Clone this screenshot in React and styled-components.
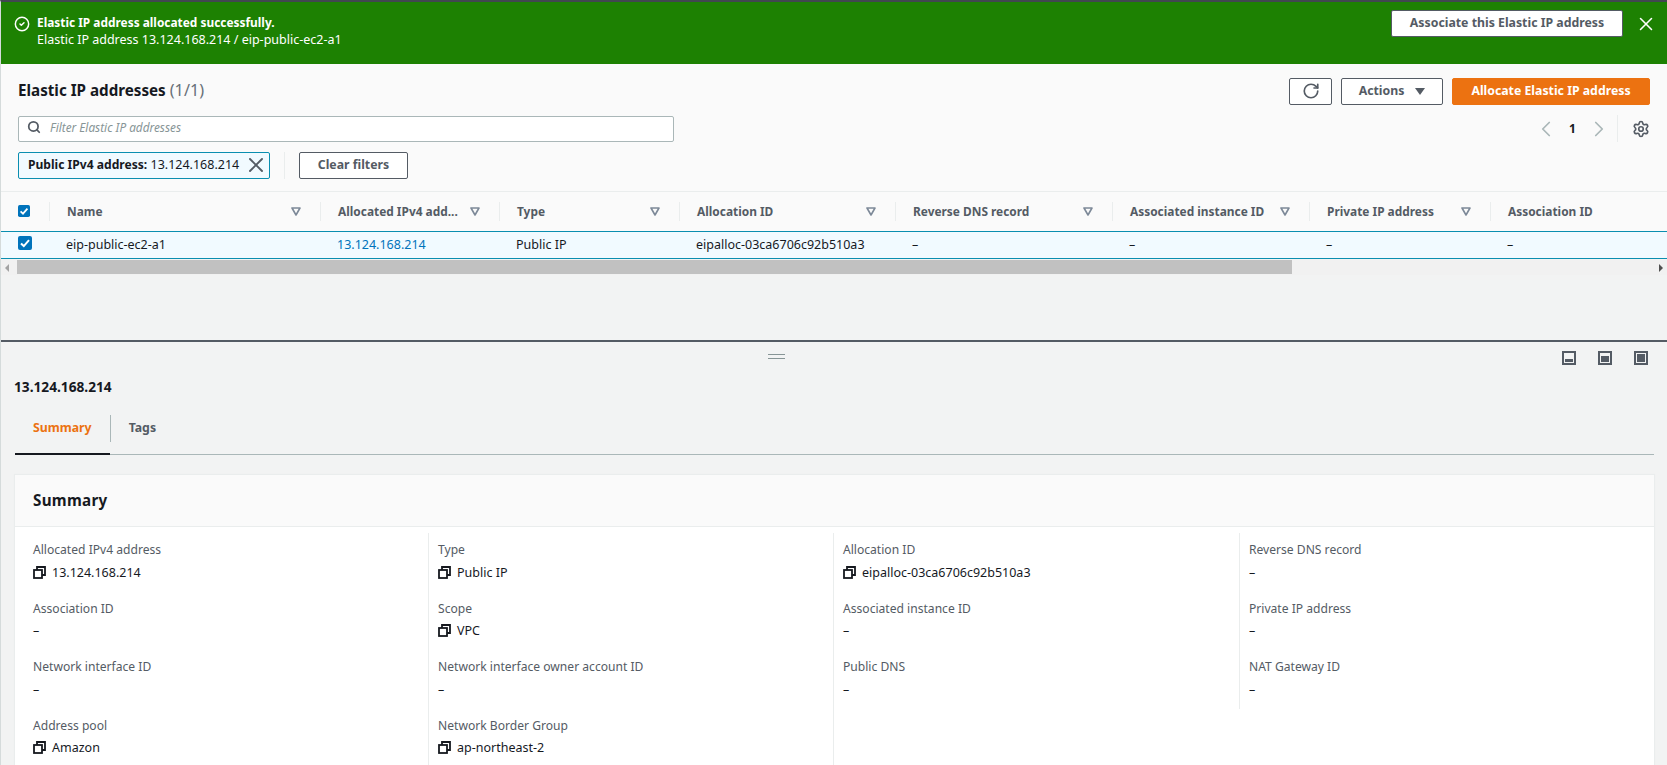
import React from 'react';
import styled, { createGlobalStyle } from 'styled-components';
import { ChevronLeft, ChevronRight, CircleCheck, RotateCw, Search, Settings, X } from 'lucide-react';

const GlobalStyle = createGlobalStyle`
  html, body { margin: 0; padding: 0; height: 100%; overflow: hidden; }
  body { font-family: "Noto Sans", "Liberation Sans", sans-serif; font-size: 13px; color: #16191f; }
  * { box-sizing: border-box; }
`;

const Page = styled.div`
  width: 1667px;
  height: 765px;
  overflow: hidden;
  border-top: 2px solid #414750;
  border-left: 1px solid #d5dbdb;
  background: #f2f3f3;
`;

const Banner = styled.div`
  height: 62px;
  background: #1d8102;
  color: #fff;
  display: flex;
  align-items: flex-start;
  padding: 8px 10px 0 13px;
`;

const BannerText = styled.div`
  flex: 1;
  margin-left: 7px;
  padding-top: 4px;
  line-height: 17px;
  font-size: 12.5px;
  strong { display: block; font-weight: 700; font-size: 11.9px; }
`;

const BaseButton = styled.button`
  font-family: inherit;
  font-weight: 700;
  font-size: 12.3px;
  height: 27px;
  border-radius: 2px;
  border: 1px solid #545b64;
  background: #fff;
  color: #545b64;
  display: inline-flex;
  align-items: center;
  justify-content: center;
  padding: 0 0 2px;
  width: ${(p) => p.$w}px;
`;

const OrangeButton = styled(BaseButton)`
  background: #ec7211;
  border-color: #ec7211;
  color: #fff;
`;

const CloseBtn = styled.span`
  display: inline-flex;
  margin: 1px 0 0 12px;
  width: 22px;
  justify-content: center;
`;

const Panel = styled.section`
  background: #fafafa;
  height: 127px;
  padding: 14px 17px 0 17px;
`;

const TitleRow = styled.div`
  display: flex;
  align-items: center;
  justify-content: space-between;
  height: 27px;
`;

const Title = styled.h1`
  margin: 0;
  padding-bottom: 3px;
  font-size: 15.2px;
  font-weight: 700;
  span { font-weight: 400; color: #687078; font-size: 16.3px; }
`;

const Actions = styled.div`
  display: flex;
  gap: 9px;
`;

const CaretDown = styled.span`
  width: 0;
  height: 0;
  margin: 2px 0 0 11px;
  border-left: 5px solid transparent;
  border-right: 5px solid transparent;
  border-top: 7px solid #545b64;
`;

const SearchRow = styled.div`
  display: flex;
  align-items: center;
  justify-content: space-between;
  margin-top: 10px;
`;

const SearchBox = styled.div`
  width: 656px;
  height: 26px;
  background: #fff;
  border: 1px solid #aab7b8;
  border-radius: 2px;
  display: flex;
  align-items: center;
  padding: 0 0 3px 8px;
  gap: 9px;
  font-style: italic;
  font-size: 11.8px;
  color: #879596;
`;

const Pager = styled.div`
  display: flex;
  align-items: center;
  color: #16191f;
  font-weight: 700;
  font-size: 12px;
  height: 27px;
`;

const PagerNum = styled.span`
  width: 27px;
  text-align: center;
`;

const PagerSplit = styled.span`
  width: 1px;
  height: 27px;
  background: #eaeded;
  margin: 0 14px 0 5px;
`;

const ChipRow = styled.div`
  display: flex;
  align-items: center;
  margin-top: 10px;
`;

const Chip = styled.div`
  width: 252px;
  height: 27px;
  background: #f1faff;
  border: 1px solid #0a8eb0;
  border-radius: 2px;
  display: flex;
  align-items: center;
  justify-content: space-between;
  padding: 0 1px 2px 9px;
  font-size: 12.5px;
  b { font-weight: 700; font-size: 12.1px; }
`;

const ChipSplit = styled.span`
  width: 1px;
  height: 27px;
  background: #eaeded;
  margin: 0 14px 0 14px;
`;

const TableHead = styled.div`
  display: flex;
  height: 40px;
  align-items: center;
  background: #fafafa;
  border-top: 1px solid #eaeded;
`;

const HeadCell = styled.div`
  width: ${(p) => p.$w}px;
  flex: none;
  height: 19px;
  display: flex;
  align-items: center;
  justify-content: space-between;
  padding: 0 19px 1px 17px;
  border-left: ${(p) => (p.$first ? 'none' : '1px solid #eaeded')};
  font-weight: 700;
  font-size: 11.9px;
  color: #545b64;
  white-space: nowrap;
`;

const TableRow = styled.div`
  display: flex;
  height: 28px;
  align-items: center;
  background: #f1faff;
  border-top: 1px solid #0a8eb0;
  border-bottom: 1px solid #0a8eb0;
`;

const BodyCell = styled.div`
  width: ${(p) => p.$w}px;
  flex: none;
  padding-left: 17px;
  font-size: 12.5px;
  white-space: nowrap;
  padding-bottom: 1px;
  color: ${(p) => (p.$link ? '#0073bb' : '#16191f')};
`;

const Scrollbar = styled.div`
  height: 15px;
  margin-top: 1px;
  background: #f1f1f1;
  display: flex;
  align-items: center;
  justify-content: space-between;
  position: relative;
`;

const Thumb = styled.div`
  position: absolute;
  left: 16px;
  top: 0;
  width: 1275px;
  height: 14px;
  background: #c1c1c1;
`;

const Arrow = styled.span`
  width: 0;
  height: 0;
  margin: 0 4px;
  border-top: 4px solid transparent;
  border-bottom: 4px solid transparent;
  border-${(p) => (p.$left ? 'right' : 'left')}: 4px solid ${(p) => (p.$left ? '#a3a3a3' : '#505050')};
`;

const Gutter = styled.div`
  height: 67px;
  border-bottom: 2px solid #545b64;
`;

const PaneBar = styled.div`
  display: grid;
  grid-template-columns: 1fr auto 1fr;
  padding: 9px 19px 0 13px;
  height: 28px;
`;

const Handle = styled.div`
  grid-column: 2;
  width: 17px;
  height: 5px;
  margin: 3px 110px 0 0;
  border-top: 1px solid #879596;
  border-bottom: 1px solid #879596;
`;

const PaneIcons = styled.div`
  grid-column: 3;
  display: flex;
  justify-content: flex-end;
  gap: 22px;
`;

const PaneTitle = styled.h2`
  margin: 7px 0 0 13px;
  height: 20px;
  line-height: 20px;
  font-size: 13.7px;
  font-weight: 700;
`;

const TabList = styled.div`
  display: flex;
  margin: 18px 13px 0 14px;
  border-bottom: 1px solid #aab7b8;
`;

const Tab = styled.div`
  margin-bottom: -1px;
  padding-bottom: 11px;
  border-bottom: 2px solid ${(p) => (p.$active ? '#16191f' : 'transparent')};
`;

const TabLabel = styled.div`
  height: 27px;
  line-height: 26px;
  padding: 0 18px;
  font-weight: 700;
  font-size: 12.3px;
  color: ${(p) => (p.$active ? '#ec7211' : '#545b64')};
  border-left: ${(p) => (p.$split ? '1px solid #aab7b8' : 'none')};
`;

const Card = styled.section`
  margin: 20px 13px 0 14px;
  background: #fff;
  box-shadow: 0 0 1px 1px #eaeded;
`;

const CardHead = styled.div`
  height: 52px;
  background: #fafafa;
  border-bottom: 1px solid #eaeded;
  padding: 0 0 2px 18px;
  display: flex;
  align-items: center;
  font-size: 15.2px;
  font-weight: 700;
  letter-spacing: 0.3px;
`;

const CardBody = styled.div`
  display: grid;
  grid-template-columns: 413px 405px 406px 1fr;
  padding-top: 6px;
`;

const Column = styled.div`
  padding: 7px 0 0 ${(p) => (p.$first ? 18 : 9)}px;
  border-left: ${(p) => (p.$first ? 'none' : '1px solid #eaeded')};
  align-self: ${(p) => (p.$short ? 'start' : 'stretch')};
  height: ${(p) => (p.$short ? '176px' : 'auto')};
`;

const Field = styled.div`
  height: 58.5px;
`;

const Label = styled.div`
  height: 20px;
  line-height: 19px;
  color: #545b64;
  font-size: 12.1px;
`;

const Value = styled.div`
  height: 24px;
  display: flex;
  align-items: center;
  gap: 6px;
  font-size: 12.5px;
`;

const SortIcon = () => (
  <svg width="10" height="9" viewBox="0 0 10 9" fill="none">
    <path d="M1 1h8L5 8z" stroke="#7d8998" strokeWidth="1.6" strokeLinejoin="round" />
  </svg>
);

const Check = () => (
  <svg width="14" height="14" viewBox="0 0 14 14">
    <rect width="14" height="14" rx="2" fill="#0073bb" />
    <path d="M3 7.5l2.8 2.6L11 4.2" fill="none" stroke="#fff" strokeWidth="2" />
  </svg>
);

const CopyIcon = () => (
  <svg width="13" height="13" viewBox="0 0 13 13" fill="none" stroke="#16191f" strokeWidth="1.8">
    <rect x="1" y="4" width="8" height="8" />
    <path d="M4 4V1h8v8H9" />
  </svg>
);

const PaneIcon = ({ fill }) => (
  <svg width="14" height="14" viewBox="0 0 14 14">
    <rect x="1" y="1" width="12" height="12" fill="none" stroke="#545b64" strokeWidth="2" />
    <rect x="3" y={fill} width="8" height={11 - fill} fill="#545b64" />
  </svg>
);

const COLS = [48, 271, 179, 180, 216, 217, 197, 181, 176];
const HEADS = ['Name', 'Allocated IPv4 add...', 'Type', 'Allocation ID', 'Reverse DNS record', 'Associated instance ID', 'Private IP address', 'Association ID'];
const ROW = ['eip-public-ec2-a1', '13.124.168.214', 'Public IP', 'eipalloc-03ca6706c92b510a3', '–', '–', '–', '–'];

const SUMMARY = [
  [
    ['Allocated IPv4 address', '13.124.168.214', true],
    ['Association ID', '–'],
    ['Network interface ID', '–'],
    ['Address pool', 'Amazon', true],
  ],
  [
    ['Type', 'Public IP', true],
    ['Scope', 'VPC', true],
    ['Network interface owner account ID', '–'],
    ['Network Border Group', 'ap-northeast-2', true],
  ],
  [
    ['Allocation ID', 'eipalloc-03ca6706c92b510a3', true],
    ['Associated instance ID', '–'],
    ['Public DNS', '–'],
  ],
  [
    ['Reverse DNS record', '–'],
    ['Private IP address', '–'],
    ['NAT Gateway ID', '–'],
  ],
];

export default function App() {
  return (
    <Page>
      <GlobalStyle />
      <Banner>
        <CircleCheck size={16} color="#fff" strokeWidth={2.2} style={{ marginTop: 6 }} />
        <BannerText>
          <strong>Elastic IP address allocated successfully.</strong>
          Elastic IP address 13.124.168.214 / eip-public-ec2-a1
        </BannerText>
        <BaseButton $w={232}>Associate this Elastic IP address</BaseButton>
        <CloseBtn>
          <X size={26} color="#fff" strokeWidth={1.7} />
        </CloseBtn>
      </Banner>

      <Panel>
        <TitleRow>
          <Title>
            Elastic IP addresses <span>(1/1)</span>
          </Title>
          <Actions>
            <BaseButton $w={43}>
              <RotateCw size={18} color="#545b64" strokeWidth={2.2} />
            </BaseButton>
            <BaseButton $w={102}>
              Actions
              <CaretDown />
            </BaseButton>
            <OrangeButton $w={198}>Allocate Elastic IP address</OrangeButton>
          </Actions>
        </TitleRow>
        <SearchRow>
          <SearchBox>
            <Search size={14} color="#545b64" strokeWidth={3} />
            Filter Elastic IP addresses
          </SearchBox>
          <Pager>
            <ChevronLeft size={26} color="#aab7b8" strokeWidth={1.6} />
            <PagerNum>1</PagerNum>
            <ChevronRight size={26} color="#aab7b8" strokeWidth={1.6} />
            <PagerSplit />
            <Settings size={18} color="#545b64" strokeWidth={2.2} />
          </Pager>
        </SearchRow>
        <ChipRow>
          <Chip>
            <span>
              <b>Public IPv4 address:</b> 13.124.168.214
            </span>
            <X size={24} color="#545b64" strokeWidth={1.9} />
          </Chip>
          <ChipSplit />
          <BaseButton $w={109}>Clear filters</BaseButton>
        </ChipRow>
      </Panel>

      <TableHead>
        <HeadCell $first $w={COLS[0]}>
          <Check />
        </HeadCell>
        {HEADS.map((h, i) => (
          <HeadCell key={h} $w={COLS[i + 1]}>
            {h}
            {i < 7 && <SortIcon />}
          </HeadCell>
        ))}
      </TableHead>
      <TableRow>
        <BodyCell $w={COLS[0]}>
          <Check />
        </BodyCell>
        {ROW.map((v, i) => (
          <BodyCell key={i} $w={COLS[i + 1]} $link={i === 1}>
            {v}
          </BodyCell>
        ))}
      </TableRow>
      <Scrollbar>
        <Arrow $left />
        <Thumb />
        <Arrow />
      </Scrollbar>
      <Gutter />

      <PaneBar>
        <Handle />
        <PaneIcons>
          <PaneIcon fill={8} />
          <PaneIcon fill={5} />
          <PaneIcon fill={3} />
        </PaneIcons>
      </PaneBar>
      <PaneTitle>13.124.168.214</PaneTitle>
      <TabList>
        <Tab $active>
          <TabLabel $active>Summary</TabLabel>
        </Tab>
        <Tab>
          <TabLabel $split>Tags</TabLabel>
        </Tab>
      </TabList>
      <Card>
        <CardHead>Summary</CardHead>
        <CardBody>
          {SUMMARY.map((col, c) => (
            <Column key={c} $first={c === 0} $short={c === 3}>
              {col.map(([label, value, copy]) => (
                <Field key={label}>
                  <Label>{label}</Label>
                  <Value>
                    {copy && <CopyIcon />}
                    {value}
                  </Value>
                </Field>
              ))}
            </Column>
          ))}
        </CardBody>
      </Card>
    </Page>
  );
}
